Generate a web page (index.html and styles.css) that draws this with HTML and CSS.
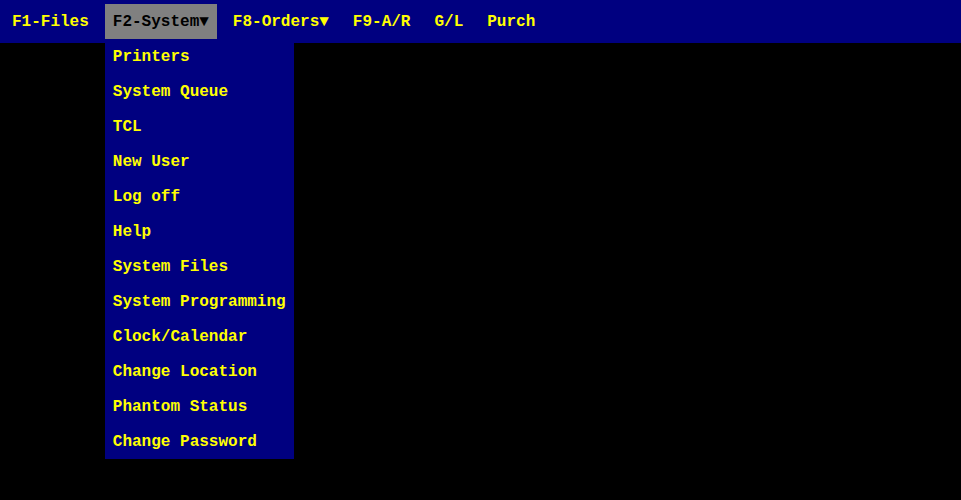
FILE: index.html
```html
<!DOCTYPE html>
<html>
<head>
<meta charset="utf-8">
<link rel="stylesheet" href="styles.css">
</head>
<body>
<nav class="menubar">
  <div class="menu-item">F1-Files</div>
  <div class="menu-item active">F2-System▼
    <ul class="dropdown">
      <li>Printers</li>
      <li>System Queue</li>
      <li>TCL</li>
      <li>New User</li>
      <li>Log off</li>
      <li>Help</li>
      <li>System Files</li>
      <li>System Programming</li>
      <li>Clock/Calendar</li>
      <li>Change Location</li>
      <li>Phantom Status</li>
      <li>Change Password</li>
    </ul>
  </div>
  <div class="menu-item">F8-Orders▼</div>
  <div class="menu-item">F9-A/R</div>
  <div class="menu-item">G/L</div>
  <div class="menu-item">Purch</div>
</nav>
</body>
</html>
```
FILE: styles.css
```css
html, body {
  margin: 0;
  padding: 0;
  background: #000000;
  height: 100%;
}
body {
  font-family: "Liberation Mono", "DejaVu Sans Mono", monospace;
  font-size: 16px;
  font-weight: bold;
  color: #ffff00;
}
.menubar {
  display: flex;
  gap: 8px;
  background: #000080;
  padding: 4px;
  height: 35px;
}
.menu-item {
  position: relative;
  padding: 9px 8px 7px 8px;
  line-height: 19px;
  white-space: nowrap;
  color: #ffff00;
}
.menu-item.active {
  background: #808080;
  color: #000000;
}
.dropdown {
  position: absolute;
  left: 0;
  top: 39px;
  margin: 0;
  padding: 0;
  list-style: none;
  background: #000080;
  color: #ffff00;
  width: max-content;
}
.dropdown li {
  padding: 5px 8px 11px 8px;
  line-height: 19px;
  white-space: nowrap;
}
.dropdown li:last-child {
  padding-bottom: 7px;
}
```
